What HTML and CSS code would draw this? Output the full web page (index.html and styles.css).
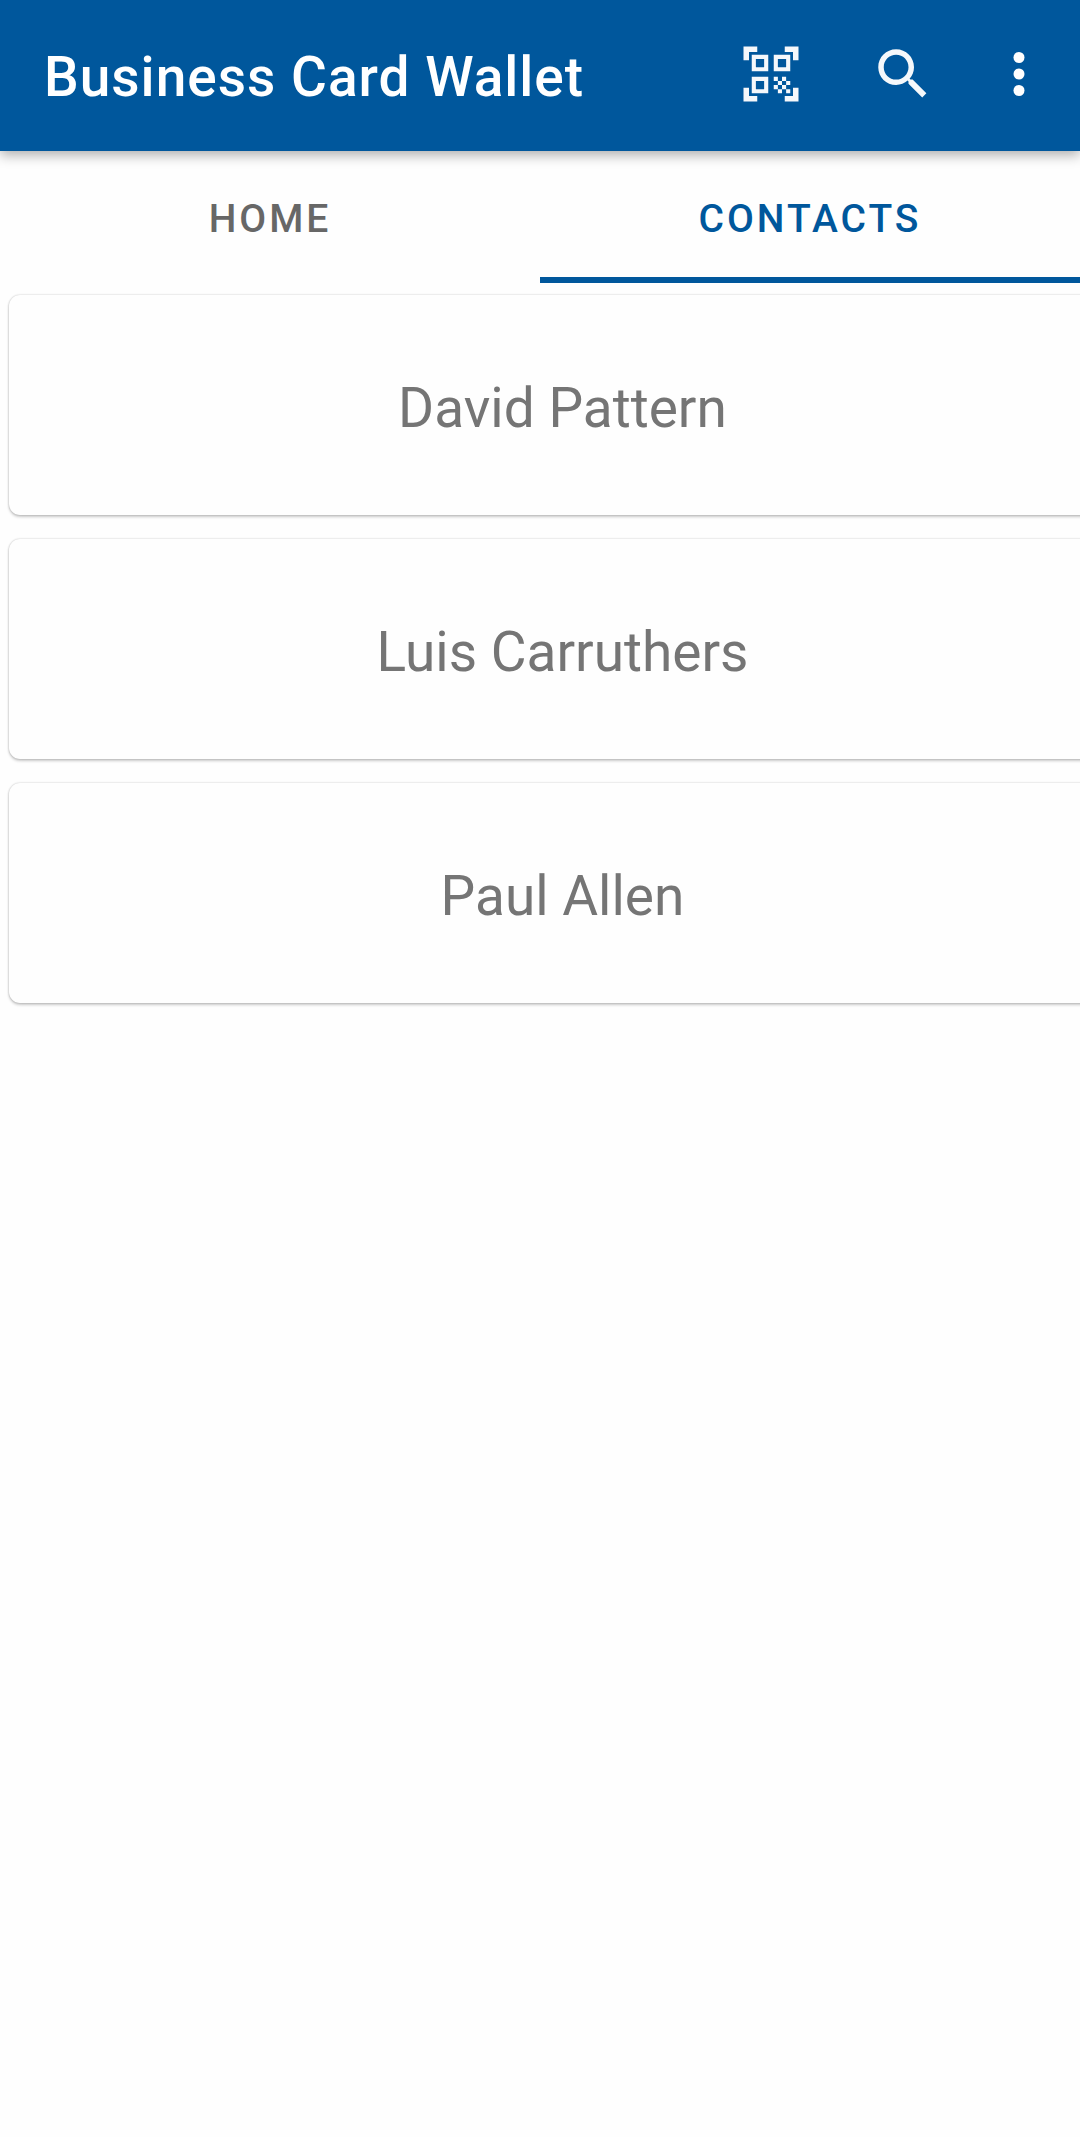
FILE: index.html
```html
<!DOCTYPE html>
<html lang="en">
<head>
<meta charset="utf-8">
<meta name="viewport" content="width=device-width, initial-scale=1">
<title>Business Card Wallet</title>
<link rel="stylesheet" href="styles.css">
</head>
<body>
<header class="app-bar">
  <h1 class="app-title">Business Card Wallet</h1>
  <div class="actions">
    <button class="action" type="button" aria-label="Scan QR code">
      <svg class="icon" viewBox="0 0 24 24" aria-hidden="true"><path d="M9.5 6.5v3h-3v-3h3M11 5H5v6h6V5zM9.5 14.5v3h-3v-3h3M11 13H5v6h6v-6zM17.5 6.5v3h-3v-3h3M19 5h-6v6h6V5zM13 13h1.500v1.500H13zM14.500 14.500H16V16h-1.500zM16 13h1.500v1.500H16zM13 16h1.500v1.500H13zM14.500 17.500H16V19h-1.500zM16 16h1.500v1.500H16zM17.500 14.500H19V16h-1.500zM17.500 17.500H19V19h-1.500zM22 7h-2V4h-3V2h5zM22 22v-5h-2v3h-3v2zM2 22h5v-2H4v-3H2zM2 2v5h2V4h3V2z"/></svg>
    </button>
    <button class="action" type="button" aria-label="Search">
      <svg class="icon" viewBox="0 0 24 24" aria-hidden="true"><path d="M15.5 14h-.8l-.3-.3c1-1.100 1.600-2.600 1.600-4.200C16 5.900 13.100 3 9.500 3S3 5.900 3 9.500 5.900 16 9.500 16c1.600 0 3.100-.6 4.200-1.600l.3.3v.8l5 5 1.500-1.500zM9.500 14C7 14 5 12 5 9.500S7 5 9.500 5 14 7 14 9.500 12 14 9.500 14z"/></svg>
    </button>
    <button class="action action-more" type="button" aria-label="More options">
      <svg class="icon" viewBox="0 0 24 24" aria-hidden="true"><circle cx="12" cy="6" r="2"/><circle cx="12" cy="12" r="2"/><circle cx="12" cy="18" r="2"/></svg>
    </button>
  </div>
</header>
<nav class="tabs" role="tablist">
  <button class="tab" type="button" role="tab" aria-selected="false">HOME</button>
  <button class="tab tab-active" type="button" role="tab" aria-selected="true">CONTACTS</button>
</nav>
<main class="viewport">
  <ul class="contacts">
    <li class="card">David Pattern</li>
    <li class="card">Luis Carruthers</li>
    <li class="card">Paul Allen</li>
  </ul>
</main>
</body>
</html>
```
FILE: styles.css
```css
* {
  box-sizing: border-box;
}

body {
  margin: 0;
  min-height: 100vh;
  background: #fefefe;
  font-family: Roboto, "Liberation Sans", sans-serif;
}

button {
  border: 0;
  padding: 0;
  background: none;
  font: inherit;
  color: inherit;
  cursor: pointer;
}

.app-bar {
  position: relative;
  display: flex;
  align-items: stretch;
  justify-content: space-between;
  padding: 0 11px 3px 44px;
  background: #00579c;
  color: #fff;
  box-shadow: 0 4px 12px rgba(0, 0, 0, 0.32);
}

.app-title {
  margin: 0;
  padding-top: 45px;
  font-size: 55px;
  font-weight: 500;
  line-height: 64px;
  letter-spacing: 1px;
  white-space: nowrap;
}

.actions {
  display: flex;
}

.action {
  display: flex;
  align-items: center;
  justify-content: center;
  width: 132px;
  height: 148px;
}

.action-more {
  width: 100px;
}

.icon {
  width: 66px;
  height: 66px;
  fill: #f5f8fb;
}

.action-more .icon {
  fill: #fff;
}

.tabs {
  display: flex;
}

.tab {
  flex: 1;
  height: 132px;
  padding-top: 10px;
  border-bottom: 6px solid transparent;
  font-size: 39px;
  font-weight: 500;
  letter-spacing: 3px;
  color: #676767;
}

.tab-active {
  border-bottom-color: #00579c;
  color: #00579c;
}

.viewport {
  overflow: hidden;
}

/* The list runs past the right edge of the screen. */
.contacts {
  display: grid;
  gap: 24px;
  margin: 0 -36px 0 9px;
  padding: 12px 0;
  list-style: none;
}

.card {
  display: flex;
  align-items: center;
  justify-content: center;
  height: 220px;
  padding-top: 6px;
  border-radius: 11px;
  background: #fefefe;
  box-shadow: 0 0 2px rgba(0, 0, 0, 0.24), 0 2px 3px rgba(0, 0, 0, 0.2);
  font-size: 55px;
  line-height: 64px;
  color: #757575;
}
```
